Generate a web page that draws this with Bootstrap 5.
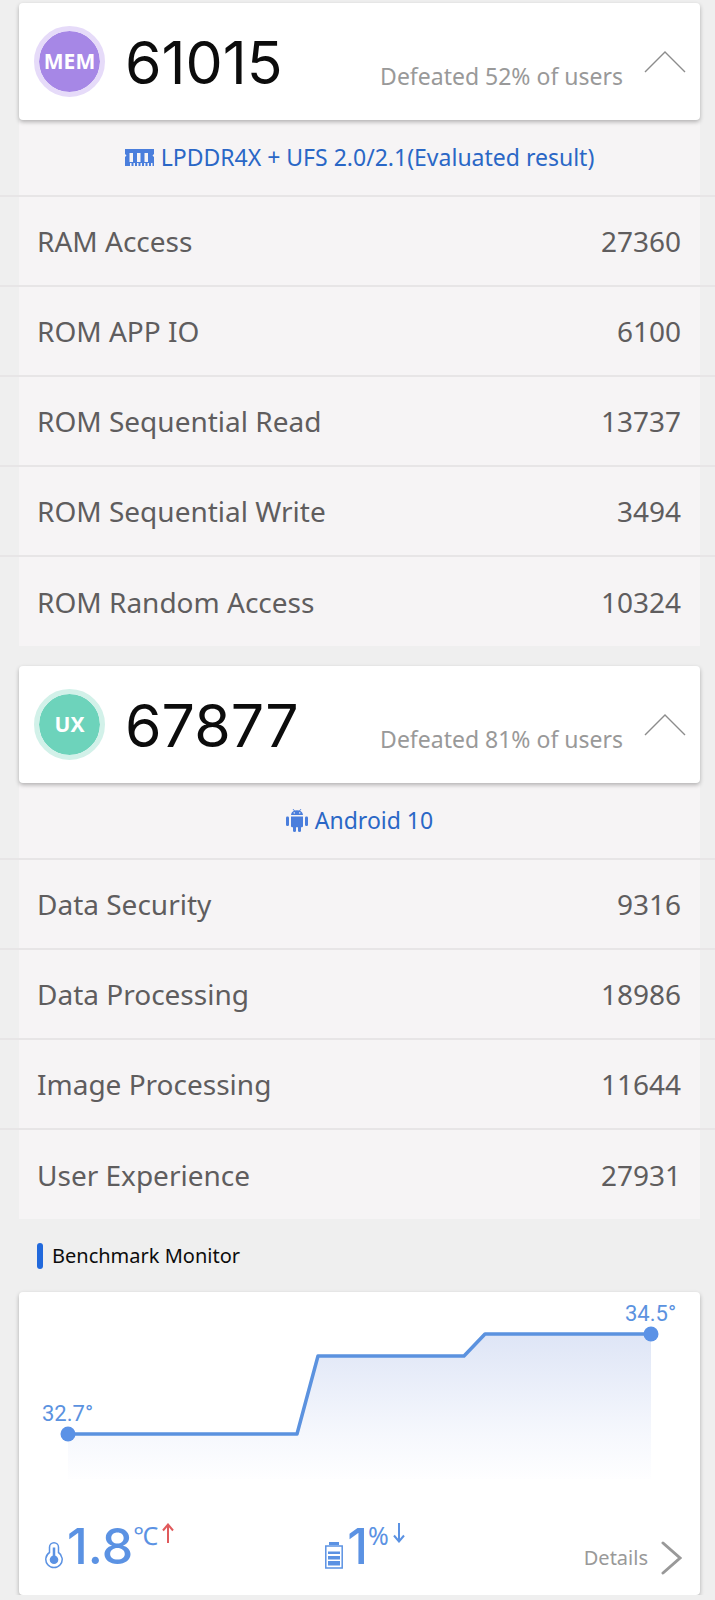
<!DOCTYPE html>
<html lang="en">
<head>
<meta charset="utf-8">
<meta name="viewport" content="width=device-width, initial-scale=1">
<title>Benchmark results</title>
<link href="https://cdn.jsdelivr.net/npm/bootstrap@5.3.0/dist/css/bootstrap.min.css" rel="stylesheet">
<style>
  body { background: #efefef; color: #5f5d5e; font-family: "Noto Sans", "Open Sans", sans-serif; }
  main { padding-top: 3px; }
  .gutter { padding-left: 19px; padding-right: 15px; }
  .sheet { background: #fff; border-radius: 4px; box-shadow: 0 2px 4px rgba(0,0,0,.28); }
  .score-head { height: 117px; padding: 0 14px 0 15px; }
  .tag { width: 71px; height: 71px; border: 5px solid; border-radius: 50%; background-clip: padding-box; color: #fff; font-size: 21px; font-weight: 700; }
  .tag-mem { background-color: #a687e6; border-color: #e6dbf9; }
  .tag-ux { background-color: #6dd3bb; border-color: #d2f1e9; }
  .score { font-family: Inter, "Noto Sans", sans-serif; font-size: 59px; line-height: 72px; color: #0c0c0c; margin-left: 20px; padding-top: 2px; }
  .rank { font-size: 23px; line-height: 30px; color: #999; padding-top: 28px; margin-right: 21px; }
  .panel { background: #f6f4f5; }
  .spec { height: 75px; padding-bottom: 1px; gap: 7px; font-size: 23px; color: #2a67c6; }
  .results > li { border-top: 2px solid #e7e5e6; }
  .results .panel { height: 88px; padding: 0 19px 0 18px; font-size: 28px; }
  .results > li:last-child .panel { height: 89px; }
  .next-group { margin-top: 20px; }
  .section-title { font-size: 20px; line-height: 26px; color: #0c0c0c; padding: 24px 0 23px 18px; gap: 9px; }
  .section-title::before { content: ""; width: 6px; height: 26px; border-radius: 3px; background: #2169dc; }
  .chart text { font-family: Roboto, sans-serif; font-size: 22px; fill: #5b92df; }
  .summary { padding: 41px 18px 20px 26px; color: #5b92e3; }
  .metric { padding-bottom: 6px; }
  .metric-wide { flex: 0 0 44%; }
  .value { font-family: Inter, "Noto Sans", sans-serif; font-size: 50px; line-height: 46px; font-weight: 500; margin-left: 4px; }
  .unit { font-size: 25px; line-height: 24px; }
  .details { font-size: 20px; line-height: 28px; color: #999; gap: 13px; }
</style>
</head>
<body>
<main>
  <section>
    <div class="gutter">
      <div class="sheet score-head position-relative z-1 d-flex align-items-center">
        <span class="tag tag-mem d-flex align-items-center justify-content-center">MEM</span>
        <span class="score">61015</span>
        <span class="rank ms-auto">Defeated 52% of users</span>
        <button type="button" class="btn p-0 border-0 d-flex" data-bs-toggle="collapse" data-bs-target="#memList" aria-label="Toggle memory results">
          <svg width="42" height="22" viewBox="0 0 42 22" fill="none" stroke="#8c8c8c" stroke-width="1.4"><path d="M1 21 21 1 41 21"/></svg>
        </button>
      </div>
    </div>
    <div class="collapse show" id="memList">
      <div class="gutter">
        <div class="panel spec d-flex align-items-center justify-content-center">
          <svg width="29" height="17" viewBox="0 0 29 17"><path fill="#4a7edc" fill-rule="evenodd" d="M0 0h29v5l-1.500 1.500 1.500 1.500v9h-1.500v-3h-1.500v3h-2v-3h-1.500v3h-2v-3h-1.500v3h-2v-3h-1.500v3h-2v-3h-1.500v3h-2v-3h-1.500v3h-2v-3h-1.500v3H0V8l1.500-1.500L0 5zM4.500 4v9h3.500V4zm7.500 0v9h3.500V4zm7.500 0v9h3.500V4z"/></svg>
          <span>LPDDR4X + UFS 2.0/2.1(Evaluated result)</span>
        </div>
      </div>
      <ul class="results list-unstyled mb-0">
        <li><div class="gutter"><div class="panel d-flex align-items-center justify-content-between"><span>RAM Access</span><span>27360</span></div></div></li>
        <li><div class="gutter"><div class="panel d-flex align-items-center justify-content-between"><span>ROM APP IO</span><span>6100</span></div></div></li>
        <li><div class="gutter"><div class="panel d-flex align-items-center justify-content-between"><span>ROM Sequential Read</span><span>13737</span></div></div></li>
        <li><div class="gutter"><div class="panel d-flex align-items-center justify-content-between"><span>ROM Sequential Write</span><span>3494</span></div></div></li>
        <li><div class="gutter"><div class="panel d-flex align-items-center justify-content-between"><span>ROM Random Access</span><span>10324</span></div></div></li>
      </ul>
    </div>
  </section>

  <section class="next-group">
    <div class="gutter">
      <div class="sheet score-head position-relative z-1 d-flex align-items-center">
        <span class="tag tag-ux d-flex align-items-center justify-content-center">UX</span>
        <span class="score">67877</span>
        <span class="rank ms-auto">Defeated 81% of users</span>
        <button type="button" class="btn p-0 border-0 d-flex" data-bs-toggle="collapse" data-bs-target="#uxList" aria-label="Toggle user experience results">
          <svg width="42" height="22" viewBox="0 0 42 22" fill="none" stroke="#8c8c8c" stroke-width="1.4"><path d="M1 21 21 1 41 21"/></svg>
        </button>
      </div>
    </div>
    <div class="collapse show" id="uxList">
      <div class="gutter">
        <div class="panel spec d-flex align-items-center justify-content-center">
          <svg width="22" height="23" viewBox="0 0 22 23" fill="#4a7edc"><path fill-rule="evenodd" d="M5 6c.2-2.300 1.500-3.600 3-4.300L6.600.4l.7-.4 1.500 1.500q2.200-.7 4.400 0L14.700 0l.7.4L14 1.700c1.500.7 2.800 2 3 4.300zM8.200 3.300a.7.7 0 1 0 .1 0zm5.500 0a.7.7 0 1 0 .1 0z"/><path d="M5 7.500h12V17q0 1.200-1.200 1.200H15v3.500q0 1.300-1.500 1.300T12 21.700v-3.500h-2v3.500Q10 23 8.500 23T7 21.700v-3.500h-.8Q5 18.200 5 17z"/><rect y="7.500" width="3" height="9.500" rx="1.200"/><rect x="19" y="7.500" width="3" height="9.500" rx="1.200"/></svg>
          <span>Android 10</span>
        </div>
      </div>
      <ul class="results list-unstyled mb-0">
        <li><div class="gutter"><div class="panel d-flex align-items-center justify-content-between"><span>Data Security</span><span>9316</span></div></div></li>
        <li><div class="gutter"><div class="panel d-flex align-items-center justify-content-between"><span>Data Processing</span><span>18986</span></div></div></li>
        <li><div class="gutter"><div class="panel d-flex align-items-center justify-content-between"><span>Image Processing</span><span>11644</span></div></div></li>
        <li><div class="gutter"><div class="panel d-flex align-items-center justify-content-between"><span>User Experience</span><span>27931</span></div></div></li>
      </ul>
    </div>
  </section>

  <section class="gutter">
    <h2 class="section-title d-flex align-items-center mb-0 fw-normal">Benchmark Monitor</h2>
    <div class="sheet">
      <svg class="chart d-block w-100" viewBox="0 0 681 190" role="img" aria-label="Temperature rose from 32.7 to 34.5 degrees">
        <defs><linearGradient id="heat" x1="0" y1="42" x2="0" y2="187" gradientUnits="userSpaceOnUse"><stop offset="0" stop-color="#dee5f6"/><stop offset=".7" stop-color="#f6f8fd"/><stop offset="1" stop-color="#fefeff"/></linearGradient></defs>
        <path fill="url(#heat)" d="M49 142H278L299 64H445L466 42H632V187H49z"/>
        <path fill="none" stroke="#5b92df" stroke-width="3.500" stroke-linejoin="round" d="M49 142H278L299 64H445L466 42H632"/>
        <g fill="#5b92e6"><circle cx="49" cy="142" r="7.500"/><circle cx="632" cy="42" r="7.500"/></g>
        <text x="23" y="129">32.7°</text>
        <text x="606" y="29">34.5°</text>
      </svg>
      <div class="summary d-flex align-items-end">
        <div class="metric metric-wide d-flex align-items-end">
          <svg width="18" height="27" viewBox="0 0 18 27" fill="none" stroke="#5b92e3" stroke-width="1.500"><path d="M4.500 10.500V5.300a4.500 4.500 0 0 1 9 0v5.200a8.200 8.200 0 1 1-9 0z"/><circle cx="9" cy="17.800" r="4.300" fill="#5b92e3" stroke="none"/><path stroke-width="2.500" d="M9 5.500V18"/></svg>
          <span class="value">1.8</span>
          <span class="unit align-self-start">℃</span>
          <svg class="align-self-start ms-1" width="12" height="20" viewBox="0 0 12 20" fill="none" stroke="#e05a5c" stroke-width="2"><path d="M6 20V2M1 7.500l5-6 5 6"/></svg>
        </div>
        <div class="metric d-flex align-items-end">
          <svg width="18" height="27" viewBox="0 0 18 27" fill="#5b92e3"><path d="M4 0h10v3H4z"/><path fill="none" stroke="#5b92e3" stroke-width="1.500" d="M.8 4h16.400v22H.8z"/><path d="M3 9.500h12v2.500H3zm0 4.500h12v3.500H3zm0 5h12v4.500H3z"/></svg>
          <span class="value">1</span>
          <span class="unit align-self-start">%</span>
          <svg class="align-self-start ms-1" width="12" height="20" viewBox="0 0 12 20" fill="none" stroke="#5b92e3" stroke-width="2"><path d="M6 0v18M1 12.500l5 6 5-6"/></svg>
        </div>
        <a href="#details" class="details ms-auto d-flex align-items-center text-decoration-none">Details
          <svg width="21" height="34" viewBox="0 0 21 34" fill="none" stroke="#999" stroke-width="3" stroke-linecap="round"><path d="M2 2 19 17 2 32"/></svg>
        </a>
      </div>
    </div>
  </section>
</main>
<script src="https://cdn.jsdelivr.net/npm/bootstrap@5.3.0/dist/js/bootstrap.bundle.min.js"></script>
</body>
</html>
